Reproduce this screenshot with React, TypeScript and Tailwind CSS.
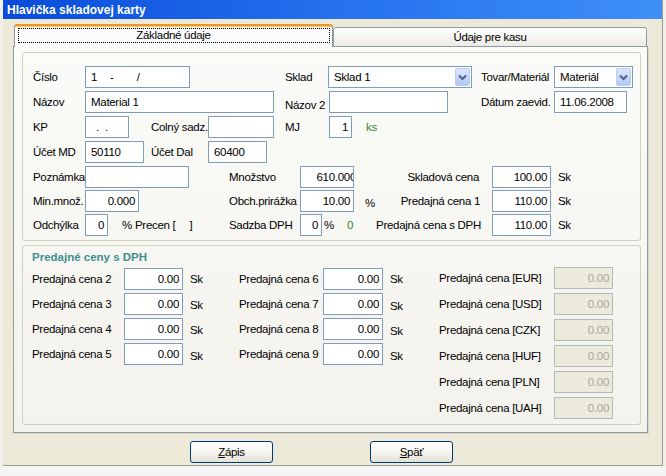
import React from "react";

type P = { className?: string; children?: React.ReactNode };

const Lbl = ({ className = "", children }: P) => (
  <span className={`shrink-0 whitespace-nowrap leading-[15px] ${className}`}>{children}</span>
);

const Box = ({
  className = "",
  children,
  right,
  disabled,
}: P & { right?: boolean; disabled?: boolean }) => (
  <div
    className={`h-[22px] shrink-0 border flex items-center overflow-hidden whitespace-nowrap leading-[15px] ${
      disabled ? "border-[#b3b8bd] bg-[#ebeadb] text-[#aca899]" : "border-[#7f9db9] bg-white"
    } ${right ? "justify-end pr-[3px]" : "pl-[5px]"} ${className}`}
  >
    {children}
  </div>
);

const Arrow = () => (
  <div className="w-[15px] h-[18px] shrink-0 rounded-[2px] border border-[#bccdf3] bg-gradient-to-b from-[#dbe6fe] to-[#b3c8f6] flex items-center justify-center">
    <svg width="9" height="7" viewBox="0 0 9 7">
      <path d="M1 1.5 L4.5 5 L8 1.5" fill="none" stroke="#4d6185" strokeWidth="2" />
    </svg>
  </div>
);

const Combo = ({ className = "", children }: P) => (
  <div className={`h-[22px] shrink-0 border border-[#7f9db9] bg-white flex items-center pl-[5px] pr-[1px] ${className}`}>
    <span className="flex-1 whitespace-nowrap leading-[15px]">{children}</span>
    <Arrow />
  </div>
);

const Row = ({ className = "", children }: P) => (
  <div className={`flex items-center h-[22px] shrink-0 ${className}`}>{children}</div>
);

const Btn = ({ className = "", children }: P) => (
  <div
    className={`h-[22px] w-[83px] shrink-0 rounded-[3px] border border-[#003c74] bg-gradient-to-b from-white via-[#f6f5f0] to-[#e3e1d6] flex items-center justify-center leading-[15px] ${className}`}
  >
    {children}
  </div>
);

export default function App() {
  return (
    <div className="w-[666px] h-[476px] overflow-hidden flex flex-col bg-[#f2f2f2] text-black font-['Liberation_Sans',Arial,sans-serif] text-[11.5px] tracking-[-0.3px]">
      <div className="flex h-[466px] shrink-0">
        <div className="w-[3px] shrink-0 bg-[#f0efe8]" />
        <div className="w-[660px] shrink-0 flex flex-col bg-[#ece9d8] border-r border-b border-[#9c9a8e]">
          {/* Title bar */}
          <div className="h-[19px] shrink-0 flex items-center pl-[4px] bg-gradient-to-r from-[#0a4bd8] via-[#2470ee] to-[#3f8ff8] text-white font-bold text-[12px] tracking-normal leading-none">
            Hlavička skladovej karty
          </div>

          <div className="flex-1 flex flex-col pl-[10px] pt-[5px]">
            {/* Tabs */}
            <div className="flex items-end h-[23px] -mb-px shrink-0">
              <div className="relative z-10 ml-px w-[319px] h-[23px] bg-[#fcfcfe] border-x border-[#919b9c] border-t-2 border-t-[#e8972d] rounded-t-[3px] shadow-[inset_0_1px_0_#ffcc55] flex items-start justify-center pt-[1px]">
                <div className="mt-[1px] w-[312px] h-[15px] border border-dotted border-black flex items-center justify-center leading-[13px]">
                  Základné údaje
                </div>
              </div>
              <div className="w-[314px] h-[20px] border border-[#919b9c] rounded-t-[3px] bg-gradient-to-b from-white to-[#ecebe5] flex items-center justify-center leading-[15px]">
                Údaje pre kasu
              </div>
            </div>

            {/* Panel */}
            <div className="w-[635px] h-[387px] shrink-0 border border-[#919b9c] bg-gradient-to-b from-[#fbfbf9] to-[#f3f2ec] shadow-[1px_1px_0_#d6d4c8] pt-[5px] pl-[8px] pr-[6px] flex flex-col">
              {/* Group 1 */}
              <div className="h-[189px] shrink-0 border border-[#d0d0bf] rounded-[3px] pt-[13px] pl-[10px] flex flex-col">
                <Row>
                  <Lbl className="w-[52px]">Číslo</Lbl>
                  <Box className="w-[105px]">
                    <span>1</span>
                    <span className="ml-[13px]">-</span>
                    <span className="ml-[23px]">/</span>
                  </Box>
                  <Lbl className="ml-[95px] w-[43px]">Sklad</Lbl>
                  <Combo className="w-[144px]">Sklad 1</Combo>
                  <Lbl className="ml-[9px] w-[73px]">Tovar/Materiál</Lbl>
                  <Combo className="w-[79px]">Materiál</Combo>
                </Row>
                <Row className="mt-[3px]">
                  <Lbl className="w-[52px]">Názov</Lbl>
                  <Box className="w-[189px]">Material 1</Box>
                  <Lbl className="ml-[11px] w-[44px] self-end">Názov 2</Lbl>
                  <Box className="w-[119px]" />
                  <Lbl className="ml-[33px] w-[73px]">Dátum zaevid.</Lbl>
                  <Box className="w-[73px]">11.06.2008</Box>
                </Row>
                <Row className="mt-[3px]">
                  <Lbl className="w-[52px]">KP</Lbl>
                  <Box className="w-[44px]">
                    <span className="ml-[5px]">.</span>
                    <span className="ml-[6px]">.</span>
                  </Box>
                  <Lbl className="ml-[22px] w-[57px]">Colný sadz.</Lbl>
                  <Box className="w-[66px]" />
                  <Lbl className="ml-[11px] w-[44px]">MJ</Lbl>
                  <Box className="w-[23px]" right>
                    1
                  </Box>
                  <Lbl className="ml-[14px] text-[#2f8a2f]">ks</Lbl>
                </Row>
                <Row className="mt-[3px]">
                  <Lbl className="w-[52px]">Účet MD</Lbl>
                  <Box className="w-[59px]">50110</Box>
                  <Lbl className="ml-[7px] w-[57px]">Účet Dal</Lbl>
                  <Box className="w-[59px]">60400</Box>
                </Row>
                <Row className="mt-[3px]">
                  <Lbl className="w-[52px]">Poznámka</Lbl>
                  <Box className="w-[104px]" />
                  <Lbl className="ml-[40px] w-[71px]">Množstvo</Lbl>
                  <Box className="w-[54px] !pr-0" right>
                    <span className="-mr-[3px]">610.000</span>
                  </Box>
                  <div className="w-[127px] shrink-0 flex justify-end pr-[2px]">
                    <Lbl>Skladová cena</Lbl>
                  </div>
                  <Box className="ml-[11px] w-[59px]" right>
                    100.00
                  </Box>
                  <Lbl className="ml-[7px]">Sk</Lbl>
                </Row>
                <Row className="mt-[2px]">
                  <Lbl className="w-[52px]">Min.množ.</Lbl>
                  <Box className="w-[54px]" right>
                    0.000
                  </Box>
                  <Lbl className="ml-[90px] w-[71px]">Obch.prirážka</Lbl>
                  <Box className="w-[54px]" right>
                    10.00
                  </Box>
                  <div className="w-[127px] shrink-0 flex items-center">
                    <Lbl className="ml-[11px] mt-[4px]">%</Lbl>
                    <span className="flex-1 text-right whitespace-nowrap leading-[15px] pr-[1px]">Predajná cena 1</span>
                  </div>
                  <Box className="ml-[11px] w-[59px]" right>
                    110.00
                  </Box>
                  <Lbl className="ml-[7px]">Sk</Lbl>
                </Row>
                <Row className="mt-[2px]">
                  <Lbl className="w-[52px]">Odchýlka</Lbl>
                  <Box className="w-[23px]" right>
                    0
                  </Box>
                  <Lbl className="ml-[14px] w-[13px]">%</Lbl>
                  <div className="w-[94px] shrink-0 flex leading-[15px] whitespace-nowrap">
                    <span>Precen [</span>
                    <span className="ml-[14px]">]</span>
                  </div>
                  <Lbl className="w-[71px]">Sadzba DPH</Lbl>
                  <Box className="w-[22px]" right>
                    0
                  </Box>
                  <div className="w-[159px] shrink-0 flex items-center leading-[15px] whitespace-nowrap">
                    <span className="ml-[2px]">%</span>
                    <span className="ml-[13px] text-[#2f8a2f]">0</span>
                    <span className="flex-1 text-right">Predajná cena s DPH</span>
                  </div>
                  <Box className="ml-[11px] w-[59px]" right>
                    110.00
                  </Box>
                  <Lbl className="ml-[7px]">Sk</Lbl>
                </Row>
              </div>

              {/* Group 2 */}
              <div className="mt-[4px] h-[180px] shrink-0 border border-[#d0d0bf] rounded-[3px] pt-[4px] pl-[9px] flex flex-col">
                <div className="h-[14px] leading-[14px] font-bold text-[11.5px] tracking-normal text-[#3f8f8f]">
                  Predajné ceny s DPH
                </div>
                <div className="mt-[3px] flex">
                  <div className="w-[207px] shrink-0 pt-[1px] flex flex-col gap-[3px]">
                    {[
                      ["Predajná cena 2", ""],
                      ["Predajná cena 3", "pt-[2px]"],
                      ["Predajná cena 4", "pt-[2px]"],
                      ["Predajná cena 5", "pt-[5px]"],
                    ].map(([t, c]) => (
                      <Row key={t}>
                        <Lbl className="w-[92px]">{t}</Lbl>
                        <Box className="w-[59px]" right>
                          0.00
                        </Box>
                        <Lbl className={`ml-[7px] ${c}`}>Sk</Lbl>
                      </Row>
                    ))}
                  </div>
                  <div className="w-[200px] shrink-0 pt-[1px] flex flex-col gap-[3px]">
                    {[
                      ["Predajná cena 6", "pt-[1px]"],
                      ["Predajná cena 7", "pt-[4px]"],
                      ["Predajná cena 8", "pt-[4px]"],
                      ["Predajná cena 9", "pt-[5px]"],
                    ].map(([t, c]) => (
                      <Row key={t}>
                        <Lbl className="w-[84px]">{t}</Lbl>
                        <Box className="w-[60px]" right>
                          0.00
                        </Box>
                        <Lbl className={`ml-[7px] ${c}`}>Sk</Lbl>
                      </Row>
                    ))}
                  </div>
                  <div className="flex flex-col gap-[4px]">
                    {["EUR", "USD", "CZK", "HUF", "PLN", "UAH"].map((c) => (
                      <Row key={c}>
                        <Lbl className="w-[115px]">Predajná cena [{c}]</Lbl>
                        <Box className="w-[59px]" right disabled>
                          0.00
                        </Box>
                      </Row>
                    ))}
                  </div>
                </div>
              </div>
            </div>

            {/* Buttons */}
            <div className="mt-[8px] flex">
              <Btn className="ml-[177px]">
                <span>
                  <span className="underline">Z</span>ápis
                </span>
              </Btn>
              <Btn className="ml-[97px]">
                <span>
                  <span className="underline">S</span>päť
                </span>
              </Btn>
            </div>
          </div>
        </div>
        <div className="w-[3px] shrink-0 bg-[#f0efe8]" />
      </div>
      <div className="flex-1 bg-[#f4f4f4]" />
    </div>
  );
}
